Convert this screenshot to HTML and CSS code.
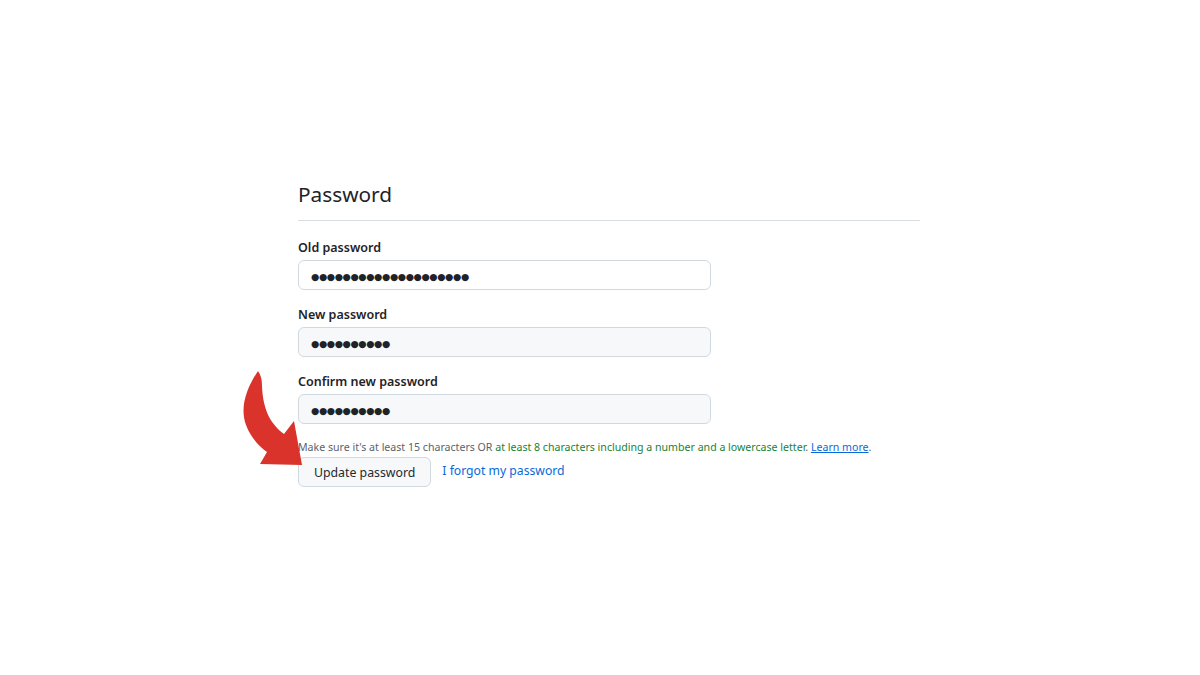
FILE: index.html
```html
<!DOCTYPE html>
<html>
<head>
<meta charset="utf-8">
<link rel="stylesheet" href="styles.css">
</head>
<body>
<div class="page">
  <svg class="arrow" width="80" height="110" viewBox="230 360 80 110" aria-hidden="true">
    <path d="M258 371 C248 386 239 406 246 425 C251 438 259 446 267 452 L260 464 L302 465 L294 421 L284 434 C272 425 263 412 262 386 C262 380 261 375 258 371 Z" fill="#d9332b"/>
  </svg>
  <section class="panel">
    <h2 class="title">Password</h2>
    <form class="form">
      <div class="field">
        <label class="label">Old password</label>
        <div class="input input-white">●●●●●●●●●●●●●●●●●●●●</div>
      </div>
      <div class="field">
        <label class="label">New password</label>
        <div class="input">●●●●●●●●●●</div>
      </div>
      <div class="field last">
        <label class="label">Confirm new password</label>
        <div class="input">●●●●●●●●●●</div>
      </div>
      <p class="note">Make sure it's at least 15 characters OR <span class="ok">at least 8 characters including a number and a lowercase letter</span>. <a class="learn" href="#">Learn more</a>.</p>
      <div class="actions">
        <button type="button" class="btn">Update password</button>
        <a class="forgot" href="#">I forgot my password</a>
      </div>
    </form>
  </section>
</div>
</body>
</html>
```
FILE: styles.css
```css
html, body {
  margin: 0;
  padding: 0;
  background: #ffffff;
}
body {
  font-family: "Noto Sans", "Open Sans", "Liberation Sans", sans-serif;
  color: #1f2328;
}
.page {
  position: relative;
  width: 1200px;
  height: 675px;
  padding-top: 176px;
  box-sizing: border-box;
}
.arrow {
  position: absolute;
  left: 230px;
  top: 360px;
}
.panel {
  margin-left: 298px;
  width: 622px;
}
.title {
  margin: 0;
  font-size: 20.8px;
  font-weight: 400;
  line-height: 36px;
  padding-bottom: 8px;
  border-bottom: 1px solid #d8dee4;
  color: #1f2328;
}
.form {
  margin-top: 17px;
}
.field {
  margin-bottom: 15px;
}
.field.last {
  margin-bottom: 14px;
}
.label {
  display: block;
  font-size: 12.5px;
  font-weight: 600;
  line-height: 20px;
  margin-bottom: 2px;
  color: #1f2328;
}
.input {
  width: 413px;
  height: 30px;
  box-sizing: border-box;
  border: 1px solid #d1d9e0;
  border-radius: 6px;
  background: #f6f8fa;
  padding: 2px 12px 0;
  font-size: 9.5px;
  letter-spacing: -0.4px;
  line-height: 28px;
  color: #1f2328;
  font-family: "DejaVu Sans", sans-serif;
}
.input-white {
  background: #ffffff;
}
.note {
  margin: 0;
  font-size: 10.6px;
  line-height: 18px;
  color: #59636e;
  white-space: nowrap;
}
.ok {
  color: #1a7f37;
}
.learn {
  color: #0969da;
  text-decoration: underline;
}
.actions {
  display: flex;
  align-items: center;
  gap: 11px;
  margin-top: 1px;
}
.btn {
  height: 30px;
  padding: 0 15px;
  font-family: inherit;
  font-size: 12.3px;
  font-weight: 400;
  color: #25292e;
  background: #f6f8fa;
  border: 1px solid #d1d9e0;
  border-radius: 6px;
}
.forgot {
  font-size: 12.2px;
  color: #0969da;
  text-decoration: none;
  margin-top: -3px;
}
```
